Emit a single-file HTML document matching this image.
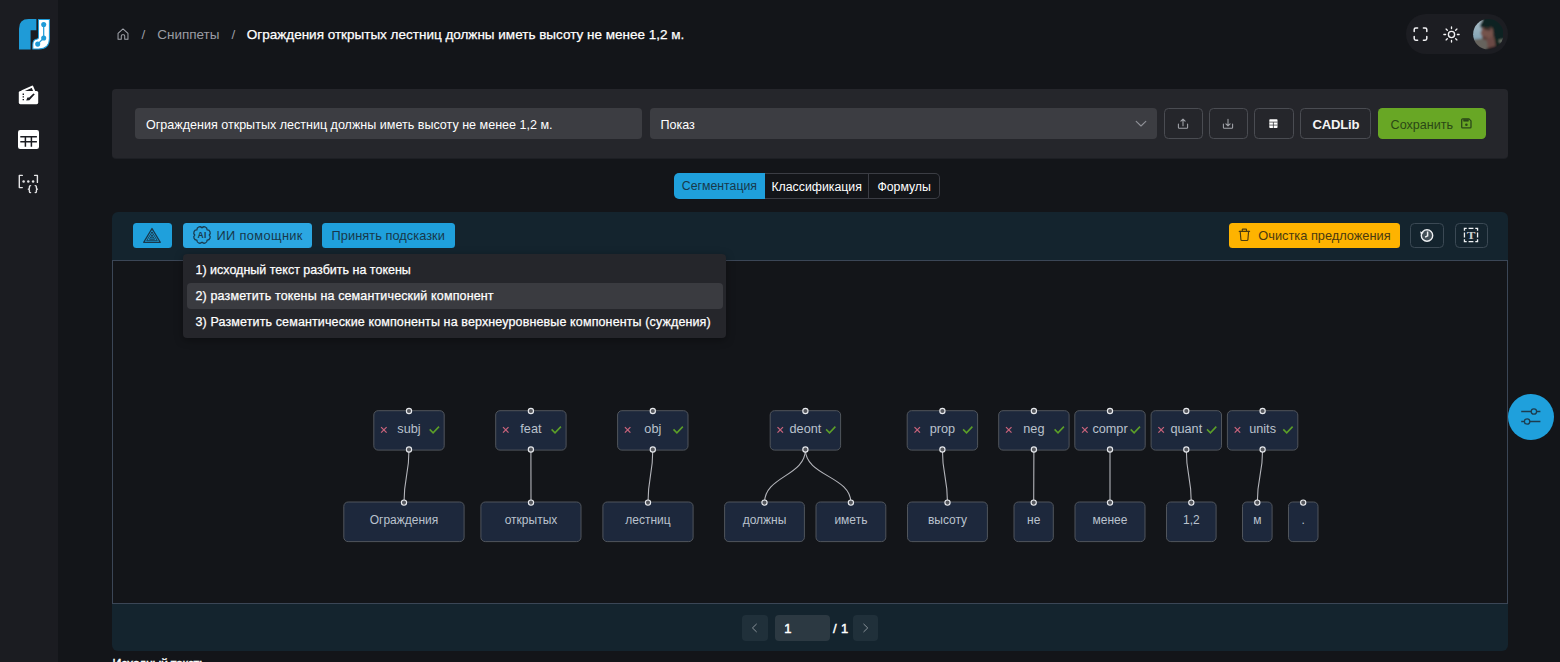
<!DOCTYPE html>
<html lang="ru">
<head>
<meta charset="utf-8">
<title>Сниппеты</title>
<style>
*{box-sizing:border-box;margin:0;padding:0}
html,body{width:1560px;height:662px;overflow:hidden;background:#131519;font-family:"Liberation Sans",sans-serif;color:#fff}
.abs{position:absolute}
#side{position:absolute;left:0;top:0;width:58px;height:662px;background:#1b1c21}
#crumb{position:absolute;left:117px;top:26px;height:18px;font-size:13.5px;line-height:18px;white-space:nowrap;color:#9a9ca3}
#crumb span{position:absolute;top:0}
#pill{position:absolute;left:1406px;top:14px;width:102px;height:40px;border-radius:20px;background:#1c1d22}
#card{position:absolute;left:112px;top:89px;width:1396px;height:69px;border-radius:4px;background:#25262b;box-shadow:0 1px 0 0 rgba(37,38,43,.6)}
.inp{position:absolute;top:19px;height:31px;border-radius:4px;background:#3c3d42;font-size:12.55px;line-height:35.5px;color:#fff;white-space:nowrap;overflow:hidden}
.obtn{position:absolute;top:19px;height:31px;border-radius:4.5px;border:1px solid #4a4c52;background:transparent}
#tabs{position:absolute;left:673.8px;top:173px;width:266.2px;height:25.8px;font-size:12.3px;white-space:nowrap}
#tabs div{position:absolute;top:0;height:25.8px;text-align:center;line-height:27.6px;overflow:hidden}
#panel{position:absolute;left:112px;top:212px;width:1396.4px;height:439px;border-radius:6px;background:#14242e}
#canvas{position:absolute;left:112px;top:260.3px;width:1396.4px;height:344.2px;background:#131519;border:1px solid #3b4656}
.bbtn{position:absolute;top:223px;height:25px;border-radius:3.5px;background:#1fa0dc;color:#17384b;font-size:12.8px;line-height:26px;overflow:hidden;white-space:nowrap}
#menu{position:absolute;left:183px;top:254.2px;width:543px;height:84px;border-radius:4px;background:#25262b;box-shadow:0 2px 8px rgba(0,0,0,.35);font-size:12.5px;color:#fff;-webkit-text-stroke:0.25px #fff}
#menu div{position:absolute;left:3.5px;width:536px;height:26px;line-height:27.8px;overflow:hidden;padding-left:9px;border-radius:4px;white-space:nowrap}
.node{position:absolute;height:40px;border:1px solid #4f545b;border-radius:5px;background:#1d283c;color:#c5ccd8;font-size:12px;line-height:36px;text-align:center;white-space:nowrap}
.h{position:absolute;width:6.2px;height:6.2px;border-radius:50%;border:1.1px solid #e8eaee;background:#4a4c52}
.node svg{position:absolute;fill:none;stroke-linecap:butt}
.node svg.x{left:5.3px;top:14.4px;stroke:#c9637b;stroke-width:1.25}
.node svg.c{left:54.3px;top:12.8px;stroke:#5c9f28;stroke-width:1.55}
.pg{height:25.7px;border-radius:4px;background:#20303a}
</style>
</head>
<body>
<div id="side">
<svg class="abs" style="left:19px;top:19px" width="31" height="31" viewBox="0 0 30.5 30.5">
<path d="M0,30 L0,9.5 Q0,0 9.5,0 L17.1,0 L17.1,11.1 L11.4,11.1 L11.4,30 Z" fill="#1f9bd7"/>
<path d="M19.2,0.5 L29.9,0.5 L29.9,19.5 Q29.9,29.5 19.5,29.5 L13.6,29.5 L13.6,25 Q13.6,20 18,19.6 Q19.2,19.4 19.2,18 Z" fill="#fff" stroke="#1f9bd7" stroke-width="1"/>
<path d="M24.3,5.4 L24.3,18.7 L18.4,24.7" fill="none" stroke="#1f9bd7" stroke-width="1.2"/>
<circle cx="24.3" cy="5.4" r="2.5" fill="#1f9bd7"/><circle cx="24.3" cy="18.7" r="2.5" fill="#1f9bd7"/><circle cx="18.4" cy="24.7" r="2.5" fill="#1f9bd7"/>
</svg>
<svg class="abs" style="left:17px;top:84px" width="24" height="22" viewBox="17 84 24 22">
<path d="M21.6,91.4 L32.3,86.6 L34.3,91.4" fill="none" stroke="#fff" stroke-width="2" stroke-linejoin="round"/>
<rect x="18.8" y="91" width="19.4" height="13.2" rx="1.6" fill="#fff"/>
<path d="M23.3,93.6v1.3M23.3,96.3v1.3M23.3,99v1.3" stroke="#1b1c21" stroke-width="1.4"/>
<path d="M26.2,100.4 L29.4,100.2 L34.8,94.2 L33.4,93.4 L29.2,97.6 L27.4,97.4 Z" fill="#1b1c21"/>
</svg>
<svg class="abs" style="left:17px;top:129px" width="24" height="22" viewBox="17 129 24 22">
<rect x="18" y="130" width="21" height="19" rx="2.2" fill="#fff"/>
<path d="M20.3,136.7H36.9M20.3,141.8H36.9M25.4,136.7V146.8M31.4,136.7V146.8" stroke="#1b1c21" stroke-width="1.5" fill="none"/>
</svg>
<svg class="abs" style="left:17px;top:173px" width="24" height="22" viewBox="17 173 24 22" fill="none" stroke="#e4e4e6" stroke-width="1.4" stroke-linecap="round" stroke-linejoin="round">
<path d="M22.3,175.4H19.3V187.6H22.3"/><path d="M34.6,175.4H37.4V182.4"/>
<path d="M30.6,185.6Q29.4,185.6 29.4,186.8V188Q29.4,189 28.4,189.1Q29.4,189.2 29.4,190.2V191.4Q29.4,192.6 30.6,192.6"/>
<path d="M35.2,185.6Q36.4,185.6 36.4,186.8V188Q36.4,189 37.4,189.1Q36.4,189.2 36.4,190.2V191.4Q36.4,192.6 35.2,192.6"/>
<g fill="#e4e4e6" stroke="none"><circle cx="23.6" cy="181.6" r="1.25"/><circle cx="28.3" cy="181.6" r="1.25"/><circle cx="33.1" cy="181.6" r="1.25"/></g>
</svg>
</div>
<div id="crumb">
<svg class="abs" style="left:0.2px;top:2.2px" width="12.4" height="12.4" viewBox="0 0 13 13" fill="none" stroke="#a1a4ab" stroke-width="1.05" stroke-linejoin="round"><path d="M1.1,5.6 L6.3,1 L11.5,5.6 V11.9 H8.1 V8.3 Q8.1,7.2 7,7.2 H5.6 Q4.5,7.2 4.5,8.3 V11.9 H1.1 Z"/></svg>
<span style="left:24.6px">/</span><span style="left:40.2px">Сниппеты</span><span style="left:114.4px">/</span><span style="left:129.8px;color:#fff;-webkit-text-stroke:0.25px #fff">Ограждения открытых лестниц должны иметь высоту не менее 1,2 м.</span>
</div>
<div id="pill">
<svg class="abs" style="left:6px;top:12px" width="18" height="17" viewBox="0 0 18 17" fill="none" stroke="#f2f2f4" stroke-width="1.5" stroke-linecap="round"><path d="M2.2,5.6V3.6Q2.2,2 3.8,2H5.6M11.4,2H13.2Q14.8,2 14.8,3.6V5.6M14.8,10.6V12.6Q14.8,14.2 13.2,14.2H11.4M5.6,14.2H3.8Q2.2,14.2 2.2,12.6V10.6"/></svg>
<svg class="abs" style="left:36px;top:10.6px" width="19" height="19" viewBox="-9.5 -9.5 19 19" fill="none" stroke="#f2f2f4" stroke-width="1.35" stroke-linecap="round"><circle r="3.1"/><path d="M0,-5.9V-7.6M0,5.9V7.6M-5.9,0H-7.6M5.9,0H7.6M4.2,-4.2L5.4,-5.4M-4.2,4.2L-5.4,5.4M4.2,4.2L5.4,5.4M-4.2,-4.2L-5.4,-5.4"/></svg>
<svg class="abs" style="left:66.7px;top:5px" width="30.6" height="30.6" viewBox="0 0 30.6 30.6"><defs><clipPath id="av"><circle cx="15.3" cy="15.3" r="15.2"/></clipPath><filter id="bl" x="-20%" y="-20%" width="140%" height="140%"><feGaussianBlur stdDeviation="1.1"/></filter><linearGradient id="sk" x1="0" y1="0" x2="0" y2="1"><stop offset="0" stop-color="#b4c4cc"/><stop offset="1" stop-color="#7fa0b2"/></linearGradient></defs>
<g clip-path="url(#av)"><g filter="url(#bl)"><rect x="-3" y="-3" width="37" height="37" fill="#10201f"/>
<rect x="-3" y="-3" width="12.5" height="25" fill="url(#sk)"/>
<path d="M-3,21 L9,19.5 L16,22 L17,34 L-3,34 Z" fill="#66645d"/>
<path d="M25.5,19.5 L34,18 L34,24 L26,23.5 Z" fill="#6f776c"/>
<path d="M8.6,7 L19,7 L20.5,14 L20,20 L15,21.5 L10.2,20.6 L9.2,18.4 L8.4,16 L7.4,14 L8.6,11.5 Z" fill="#74524c"/>
<path d="M11,8 L18,8.5 L17,11.8 L11,10.8 Z" fill="#3e2e2c"/><path d="M9.5,17 L14,18 L15,21.5 L10.2,20.6 Z" fill="#5c3f3a"/>
<path d="M13.5,20 L21,17 L23,28 L15,30.5 Z" fill="#6b4a44"/>
<path d="M6.8,8 Q7.5,0 16,-2 Q30,-3 33,10 L33,20 L24.5,21 L21.5,19 L20.5,12 L19.5,8.4 L9,8.6 Z" fill="#0e2221"/>
<path d="M10,34 L14,29.5 L23,27 L34,24 L34,34 Z" fill="#14181a"/>
</g></g></svg>
</div>
<div id="card">
<div class="inp" style="left:23px;width:507px;padding-left:11px">Ограждения открытых лестниц должны иметь высоту не менее 1,2 м.</div>
<div class="inp" style="left:538px;width:506.5px;padding-left:10.5px">Показ<svg class="abs" style="left:484.9px;top:12.2px" width="12" height="8" viewBox="0 0 12 8" fill="none" stroke="#8e9096" stroke-width="1.15" stroke-linecap="round" stroke-linejoin="round"><path d="M1.2,1.4L6,6L10.8,1.4"/></svg></div>
<div class="obtn" style="left:1052px;width:39px"><svg class="abs" style="left:12.1px;top:8.9px" width="12" height="12" viewBox="0 0 12 12" fill="none" stroke="#a3a5ab" stroke-width="1.05" stroke-linecap="round" stroke-linejoin="round"><path d="M1.4,6V9.4Q1.4,10.3 2.3,10.3H9.7Q10.6,10.3 10.6,9.4V6"/><path d="M6,7.8V1.2M3.9,3.2L6,1.1L8.1,3.2"/></svg></div>
<div class="obtn" style="left:1097px;width:39px"><svg class="abs" style="left:12.1px;top:8.9px" width="12" height="12" viewBox="0 0 12 12" fill="none" stroke="#a3a5ab" stroke-width="1.05" stroke-linecap="round" stroke-linejoin="round"><path d="M1.4,6V9.4Q1.4,10.3 2.3,10.3H9.7Q10.6,10.3 10.6,9.4V6"/><path d="M6,1.2V7.8M3.9,5.8L6,7.9L8.1,5.8"/></svg></div>
<div class="obtn" style="left:1142px;width:40px"><svg class="abs" style="left:14.3px;top:9.6px" width="9" height="10" viewBox="0 0 9 10"><rect x="0.3" y="0.3" width="8.2" height="8.8" rx="0.8" fill="#fff"/><path d="M0.3,3.1H8.5M0.3,6.1H8.5M4.4,3.1V9.1" stroke="#25262b" stroke-width="0.7" fill="none"/></svg></div>
<div class="obtn" style="left:1188.3px;width:71px;font-weight:bold;font-size:13.1px;letter-spacing:-0.2px;line-height:32px;text-align:center;overflow:hidden;color:#f4f4f5">CADLib</div>
<div class="obtn" style="left:1266px;width:108px;top:19px;height:31px;border:none;background:#68a725;color:#2b4716;font-size:12.6px;line-height:34px;padding-left:12.6px;overflow:hidden;white-space:nowrap">Сохранить<svg class="abs" style="left:82.6px;top:10.3px" width="11" height="11" viewBox="0 0 11 11" fill="none" stroke="#2a4719" stroke-width="1.3" stroke-linejoin="round"><path d="M1.6,0.9H8L10,2.9V8.9Q10,9.8 9.1,9.8H1.6Q0.7,9.8 0.7,8.9V1.8Q0.7,0.9 1.6,0.9Z"/><path d="M2.6,1.4H7.4V3.2H2.6Z" fill="#2a4719" stroke-width="0.6"/><circle cx="5.4" cy="6.7" r="1.3" fill="#2a4719" stroke="none"/></svg></div>
</div>
<div id="tabs">
<div style="left:0;width:91.2px;background:#1fa0dc;color:#17384b;border-radius:5px 0 0 5px">Сегментация</div>
<div style="left:91.2px;width:104.3px;border:1px solid #3b3d44;border-left:none">Классификация</div>
<div style="left:195.5px;width:70.7px;border:1px solid #3b3d44;border-left:none;border-radius:0 5px 5px 0">Формулы</div>
</div>
<div id="panel"></div>
<div id="canvas"></div>
<div class="bbtn" style="left:133px;width:39px"><svg class="abs" style="left:8.5px;top:4px" width="20" height="17" viewBox="0 0 20 17" fill="none" stroke="#19384b" stroke-width="1.3" stroke-linejoin="round"><path d="M10,1.5L18.3,15.3H1.7Z"/><path d="M10,5L15.3,13.7H4.7Z" stroke-width="0.9"/><path d="M10,8.2L12.6,12.3H7.4Z" stroke-width="0.9"/><path d="M10,2V11.5" stroke-width="1.3" stroke-dasharray="1.5 1.2"/></svg></div>
<div class="bbtn" style="left:183px;width:129px;padding-left:33.5px;background:#2ba7e2;letter-spacing:.37px">ИИ помощник<svg class="abs" style="left:9.1px;top:2.2px" width="20" height="20" viewBox="-10 -10 20 20" fill="none" stroke="#19384b" stroke-width="1.25" stroke-linejoin="round"><path d="M0.00,-7.20 A2.90,2.90 0 0 1 5.09,-5.09 A2.90,2.90 0 0 1 7.20,0.00 A2.90,2.90 0 0 1 5.09,5.09 A2.90,2.90 0 0 1 0.00,7.20 A2.90,2.90 0 0 1 -5.09,5.09 A2.90,2.90 0 0 1 -7.20,0.00 A2.90,2.90 0 0 1 -5.09,-5.09 A2.90,2.90 0 0 1 -0.00,-7.20Z"/><text x="0.2" y="3" text-anchor="middle" font-family="Liberation Sans,sans-serif" font-weight="bold" font-size="8.5" letter-spacing="0.4" fill="#19384b" stroke="none">AI</text></svg></div>
<div class="bbtn" style="left:322px;width:132.5px;text-align:center;letter-spacing:.04px">Принять подсказки</div>
<div class="bbtn" style="left:1229px;width:171px;background:#feb300;color:#4a3a10;padding-left:29.3px">Очистка предложения<svg class="abs" style="left:9.4px;top:5.2px" width="13" height="14" viewBox="0 0 13 14" fill="none" stroke="#4d3d0f" stroke-width="1.15" stroke-linejoin="round" stroke-linecap="round"><path d="M1.2,3.3H11.6"/><path d="M4.3,3.1V1.6Q4.3,1.1 4.8,1.1H8Q8.5,1.1 8.5,1.6V3.1"/><path d="M2.2,3.4L2.9,11.6Q3,12.5 3.9,12.5H8.9Q9.8,12.5 9.9,11.6L10.6,3.4"/></svg></div>
<div class="obtn" style="left:1410px;top:223px;width:34px;height:25px;border-color:#3b4954"><svg class="abs" style="left:7.8px;top:3.5px" width="16" height="15" viewBox="-8 -7.5 16 15" fill="none" stroke="#eef0f2"><circle r="5.7" stroke-width="1.4" fill="rgba(255,255,255,.2)"/><path d="M0.6,-3.9V0.4L-1.9,1.7" stroke-width="1.5" stroke-linejoin="round"/><path d="M-6.9,-3.9L-5.9,-0.6L-3.3,-3.1Z" fill="#eef0f2" stroke="none"/></svg></div>
<div class="obtn" style="left:1455px;top:223px;width:33px;height:25px;border-color:#3b4954"><svg class="abs" style="left:7.1px;top:2.8px" width="16" height="16" viewBox="0 0 16 16"><rect x="1.45" y="1.45" width="13.1" height="13.1" fill="none" stroke="#f0f2f4" stroke-width="1.3" stroke-dasharray="4.5 1.9 4.8 1.9" stroke-dashoffset="2.25"/><text transform="translate(8,11.7) scale(1.16,1)" text-anchor="middle" font-family="Liberation Serif,serif" font-weight="bold" font-size="11.3" fill="#c9cdd1">T</text></svg></div>
<div class="abs pg" style="left:742px;top:615.3px;width:25.5px"><svg class="abs" style="left:8.6px;top:7.6px" width="7.2" height="9.9" viewBox="0 0 8 11" fill="none" stroke="#8b949b" stroke-width="1.1" stroke-linecap="round" stroke-linejoin="round"><path d="M6,1.3L1.6,5.5L6,9.7"/></svg></div>
<div class="abs pg" style="left:775px;top:615.3px;width:55px;background:#2c3942;color:#fff;font-size:13px;-webkit-text-stroke:.45px #fff;line-height:27.6px;padding-left:9.3px;overflow:hidden">1</div>
<div class="abs" style="left:833px;top:615.3px;font-size:13px;-webkit-text-stroke:.45px #fff;line-height:27.6px;color:#fff;white-space:nowrap;letter-spacing:.4px">/ 1</div>
<div class="abs pg" style="left:853.2px;top:615.3px;width:25.3px"><svg class="abs" style="left:9.3px;top:7.6px" width="7.2" height="9.9" viewBox="0 0 8 11" fill="none" stroke="#8b949b" stroke-width="1.1" stroke-linecap="round" stroke-linejoin="round"><path d="M2,1.3L6.4,5.5L2,9.7"/></svg></div>
<div id="menu">
<div style="top:3px">1) исходный текст разбить на токены</div>
<div style="top:29.2px;background:#3a3b40;letter-spacing:.14px">2) разметить токены на семантический компонент</div>
<div style="top:55px;letter-spacing:.125px">3) Разметить семантические компоненты на верхнеуровневые компоненты (суждения)</div>
</div>
<!--GRAPH-->
<svg class="abs" style="left:0;top:0" width="1560" height="662" viewBox="0 0 1560 662" font-family="Liberation Sans,sans-serif" text-anchor="middle">
<g fill="none" stroke="#b3b4ba" stroke-width="1.1">
<path d="M409.0,449.5C409.0,476.1 404.0,476.1 404.0,502.6"/>
<path d="M530.9,449.5C530.9,476.1 531.0,476.1 531.0,502.6"/>
<path d="M652.8,449.5C652.8,476.1 648.0,476.1 648.0,502.6"/>
<path d="M805.4,449.5C805.4,476.1 764.5,476.1 764.5,502.6"/>
<path d="M805.4,449.5C805.4,476.1 850.9,476.1 850.9,502.6"/>
<path d="M942.4,449.5C942.4,476.1 947.5,476.1 947.5,502.6"/>
<path d="M1033.9,449.5C1033.9,476.1 1033.7,476.1 1033.7,502.6"/>
<path d="M1110.0,449.5C1110.0,476.1 1110.0,476.1 1110.0,502.6"/>
<path d="M1186.3,449.5C1186.3,476.1 1191.3,476.1 1191.3,502.6"/>
<path d="M1262.6,449.5C1262.6,476.1 1257.3,476.1 1257.3,502.6"/>
</g>
<g fill="#1d283c" stroke="#50555c" stroke-width="1">
<rect x="373.80" y="410.70" width="70.40" height="39.40" rx="4.3"/>
<rect x="495.70" y="410.70" width="70.40" height="39.40" rx="4.3"/>
<rect x="617.60" y="410.70" width="70.40" height="39.40" rx="4.3"/>
<rect x="770.20" y="410.70" width="70.40" height="39.40" rx="4.3"/>
<rect x="907.20" y="410.70" width="70.40" height="39.40" rx="4.3"/>
<rect x="998.70" y="410.70" width="70.40" height="39.40" rx="4.3"/>
<rect x="1074.80" y="410.70" width="70.40" height="39.40" rx="4.3"/>
<rect x="1151.10" y="410.70" width="70.40" height="39.40" rx="4.3"/>
<rect x="1227.40" y="410.70" width="70.40" height="39.40" rx="4.3"/>
<rect x="343.80" y="502.00" width="120.30" height="39.60" rx="4.3"/>
<rect x="480.90" y="502.00" width="100.10" height="39.60" rx="4.3"/>
<rect x="602.90" y="502.00" width="90.20" height="39.60" rx="4.3"/>
<rect x="724.60" y="502.00" width="79.80" height="39.60" rx="4.3"/>
<rect x="816.00" y="502.00" width="69.80" height="39.60" rx="4.3"/>
<rect x="907.50" y="502.00" width="79.90" height="39.60" rx="4.3"/>
<rect x="1014.00" y="502.00" width="39.30" height="39.60" rx="4.3"/>
<rect x="1075.00" y="502.00" width="70.00" height="39.60" rx="4.3"/>
<rect x="1166.50" y="502.00" width="49.60" height="39.60" rx="4.3"/>
<rect x="1242.50" y="502.00" width="29.60" height="39.60" rx="4.3"/>
<rect x="1288.50" y="502.00" width="29.50" height="39.60" rx="4.3"/>
</g>
<g fill="#bac2cd" font-size="12.7">
<text x="409.0" y="432.9">subj</text>
<text x="530.9" y="432.9">feat</text>
<text x="652.8" y="432.9">obj</text>
<text x="805.4" y="432.9">deont</text>
<text x="942.4" y="432.9">prop</text>
<text x="1033.9" y="432.9">neg</text>
<text x="1110.0" y="432.9">compr</text>
<text x="1186.3" y="432.9">quant</text>
<text x="1262.6" y="432.9">units</text>
</g><g fill="#bac2cd" font-size="12">
<text x="404.0" y="524.3">Ограждения</text>
<text x="531.0" y="524.3">открытых</text>
<text x="648.0" y="524.3">лестниц</text>
<text x="764.5" y="524.3">должны</text>
<text x="850.9" y="524.3">иметь</text>
<text x="947.5" y="524.3">высоту</text>
<text x="1033.7" y="524.3">не</text>
<text x="1110.0" y="524.3">менее</text>
<text x="1191.3" y="524.3">1,2</text>
<text x="1257.3" y="524.3">м</text>
<text x="1303.2" y="524.3">.</text>
</g>
<g fill="none" stroke="#c9637b" stroke-width="1.25">
<path d="M381.10,427.10L386.60,432.60M386.60,427.10L381.10,432.60"/>
<path d="M503.00,427.10L508.50,432.60M508.50,427.10L503.00,432.60"/>
<path d="M624.90,427.10L630.40,432.60M630.40,427.10L624.90,432.60"/>
<path d="M777.50,427.10L783.00,432.60M783.00,427.10L777.50,432.60"/>
<path d="M914.50,427.10L920.00,432.60M920.00,427.10L914.50,432.60"/>
<path d="M1006.00,427.10L1011.50,432.60M1011.50,427.10L1006.00,432.60"/>
<path d="M1082.10,427.10L1087.60,432.60M1087.60,427.10L1082.10,432.60"/>
<path d="M1158.40,427.10L1163.90,432.60M1163.90,427.10L1158.40,432.60"/>
<path d="M1234.70,427.10L1240.20,432.60M1240.20,427.10L1234.70,432.60"/>
</g><g fill="none" stroke="#5c9f28" stroke-width="1.55">
<path d="M429.70,429.40L433.10,432.80L439.00,426.60"/>
<path d="M551.60,429.40L555.00,432.80L560.90,426.60"/>
<path d="M673.50,429.40L676.90,432.80L682.80,426.60"/>
<path d="M826.10,429.40L829.50,432.80L835.40,426.60"/>
<path d="M963.10,429.40L966.50,432.80L972.40,426.60"/>
<path d="M1054.60,429.40L1058.00,432.80L1063.90,426.60"/>
<path d="M1130.70,429.40L1134.10,432.80L1140.00,426.60"/>
<path d="M1207.00,429.40L1210.40,432.80L1216.30,426.60"/>
<path d="M1283.30,429.40L1286.70,432.80L1292.60,426.60"/>
</g>
<g fill="#55575d" stroke="#e6e8ec" stroke-width="1.15">
<circle cx="409.0" cy="411.0" r="2.6"/><circle cx="409.0" cy="449.5" r="2.6"/>
<circle cx="530.9" cy="411.0" r="2.6"/><circle cx="530.9" cy="449.5" r="2.6"/>
<circle cx="652.8" cy="411.0" r="2.6"/><circle cx="652.8" cy="449.5" r="2.6"/>
<circle cx="805.4" cy="411.0" r="2.6"/><circle cx="805.4" cy="449.5" r="2.6"/>
<circle cx="942.4" cy="411.0" r="2.6"/><circle cx="942.4" cy="449.5" r="2.6"/>
<circle cx="1033.9" cy="411.0" r="2.6"/><circle cx="1033.9" cy="449.5" r="2.6"/>
<circle cx="1110.0" cy="411.0" r="2.6"/><circle cx="1110.0" cy="449.5" r="2.6"/>
<circle cx="1186.3" cy="411.0" r="2.6"/><circle cx="1186.3" cy="449.5" r="2.6"/>
<circle cx="1262.6" cy="411.0" r="2.6"/><circle cx="1262.6" cy="449.5" r="2.6"/>
<circle cx="404.0" cy="502.6" r="2.6"/>
<circle cx="531.0" cy="502.6" r="2.6"/>
<circle cx="648.0" cy="502.6" r="2.6"/>
<circle cx="764.5" cy="502.6" r="2.6"/>
<circle cx="850.9" cy="502.6" r="2.6"/>
<circle cx="947.5" cy="502.6" r="2.6"/>
<circle cx="1033.7" cy="502.6" r="2.6"/>
<circle cx="1110.0" cy="502.6" r="2.6"/>
<circle cx="1191.3" cy="502.6" r="2.6"/>
<circle cx="1257.3" cy="502.6" r="2.6"/>
<circle cx="1303.2" cy="502.6" r="2.6"/>
</g></svg>
<!--/GRAPH-->
<div class="abs" style="left:1507.5px;top:393.6px;width:46px;height:46px;border-radius:50%;background:#1fa0dc"><svg class="abs" style="left:11px;top:13px" width="24" height="20" viewBox="0 0 24 20" fill="none" stroke="#1d3c4f" stroke-width="1.3"><path d="M2.2,4.5H12.2M17.6,4.5H21.4M2.2,14.5H5.4M10.8,14.5H21.4"/><circle cx="14.9" cy="4.5" r="2.7"/><circle cx="8.1" cy="14.5" r="2.7"/></svg></div>
<div class="abs" style="left:112.6px;top:656.6px;font-size:12.4px;-webkit-text-stroke:0.4px #fff;line-height:14px;white-space:nowrap;letter-spacing:-0.33px">Исходный текст:</div>
</body>
</html>
